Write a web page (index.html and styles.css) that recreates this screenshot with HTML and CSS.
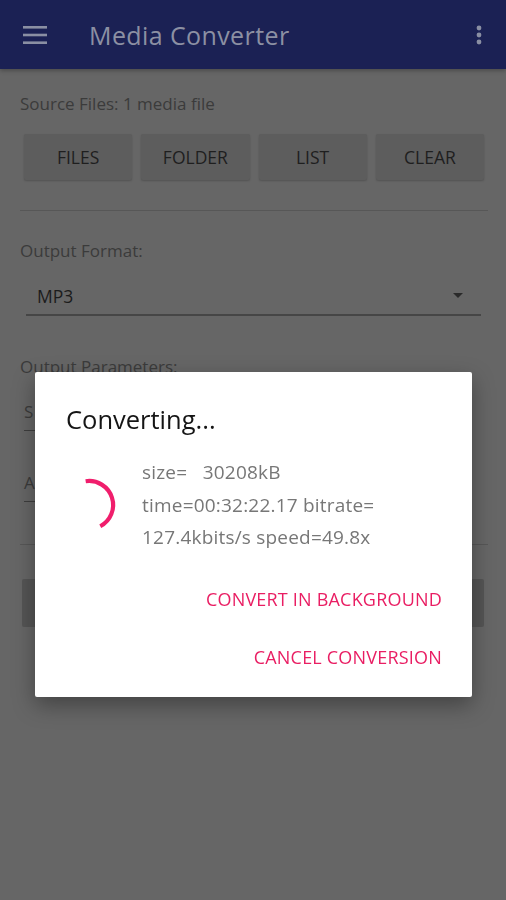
FILE: index.html
```html
<!DOCTYPE html>
<html lang="en">
<head>
    <meta charset="UTF-8">
    <meta name="viewport" content="width=device-width, initial-scale=1.0">
    <title>Media Converter</title>
    <link rel="stylesheet" href="styles.css">
</head>
<body>
    <header class="app-bar">
        <svg class="menu-icon" width="24" height="18" viewBox="0 0 24 18">
            <rect x="0" y="0" width="24" height="2.6" fill="#8a8fa3"/>
            <rect x="0" y="7.7" width="24" height="2.6" fill="#8a8fa3"/>
            <rect x="0" y="15.4" width="24" height="2.6" fill="#8a8fa3"/>
        </svg>
        <h1 class="app-title">Media Converter</h1>
        <svg class="more-icon" width="6" height="20" viewBox="0 0 6 20">
            <circle cx="3" cy="3" r="2.4" fill="#8a8fa3"/>
            <circle cx="3" cy="10" r="2.4" fill="#8a8fa3"/>
            <circle cx="3" cy="17" r="2.4" fill="#8a8fa3"/>
        </svg>
    </header>

    <main class="content">
        <p class="label source">Source Files: 1 media file</p>
        <div class="btn-row">
            <button class="flat-btn">FILES</button>
            <button class="flat-btn">FOLDER</button>
            <button class="flat-btn">LIST</button>
            <button class="flat-btn">CLEAR</button>
        </div>
        <hr class="divider">

        <p class="label">Output Format:</p>
        <div class="spinner-field">
            <span>MP3</span>
            <span class="arrow"></span>
        </div>

        <p class="label params">Output Parameters:</p>
        <div class="param-field">S</div>
        <div class="param-field">A</div>
        <hr class="divider low">
        <div class="start-btn"></div>
    </main>

    <div class="scrim">
        <div class="dialog">
            <h2 class="dialog-title">Converting...</h2>
            <div class="dialog-body">
                <svg class="progress" width="60" height="60" viewBox="0 0 60 60">
                    <path d="M30 6 A24 24 0 0 1 38.2 52.6" fill="none" stroke="#f01e6c" stroke-width="4.2" stroke-linecap="butt" transform="rotate(-8 30 30)"/>
                </svg>
                <div class="dialog-msg">
                    size=&nbsp;&nbsp;&nbsp;30208kB<br>
                    time=00:32:22.17 bitrate=<br>
                    127.4kbits/s speed=49.8x
                </div>
            </div>
            <div class="dialog-actions">
                <button class="text-btn">CONVERT IN BACKGROUND</button>
                <button class="text-btn">CANCEL CONVERSION</button>
            </div>
        </div>
    </div>
</body>
</html>
```

FILE: styles.css
```css
body {
    font-family: 'Open Sans', 'Noto Sans', sans-serif;
    background: #666666;
    margin: 0;
    padding: 0;
    height: 900px;
    overflow: hidden;
}

.app-bar {
    background: #1b2154;
    height: 69px;
    display: flex;
    align-items: center;
    padding: 0 24px 0 23px;
    box-shadow: 0 2px 4px rgba(0, 0, 0, 0.25);
}

.menu-icon {
    margin-top: 1px;
}

.app-title {
    margin: 0 0 0 42px;
    font-size: 25px;
    font-weight: 400;
    color: #8c90a3;
    flex: 1;
    letter-spacing: 0.4px;
}

.more-icon {
    margin-top: 1px;
}

.content {
    padding: 0 18px 0 20px;
}

.label {
    margin: 0;
    font-size: 17px;
    color: #3b3b3b;
}

.source {
    padding-top: 23px;
}

.btn-row {
    display: flex;
    gap: 9px;
    padding: 19px 4px 0 4px;
}

.flat-btn {
    flex: 1;
    height: 46px;
    background: #5d5d5d;
    border: none;
    border-radius: 2px;
    box-shadow: 0 1px 2px rgba(0, 0, 0, 0.2);
    font-family: inherit;
    font-size: 17.5px;
    color: #1f1f1f;
}

.divider {
    border: none;
    border-top: 1px solid #575757;
    margin: 30px 0 28px 0;
}

.spinner-field {
    margin: 15px 7px 0 6px;
    height: 37px;
    border-bottom: 2px solid #464646;
    display: flex;
    align-items: center;
    justify-content: space-between;
    padding: 0 18px 0 11px;
    font-size: 17.5px;
    color: #1c1c1c;
}

.arrow {
    width: 0;
    height: 0;
    border-left: 5px solid transparent;
    border-right: 5px solid transparent;
    border-top: 5px solid #2a2a2a;
}

.params {
    padding-top: 39px;
}

.param-field {
    margin: 22px 0 0 4px;
    width: 20px;
    height: 30px;
    border-bottom: 1px solid #3e3e3e;
    color: #3b3b3b;
    font-size: 17px;
}

.param-field + .param-field {
    margin-top: 40px;
}

.divider.low {
    margin: 42px 0 0 0;
}

.start-btn {
    margin: 34px 4px 0 2px;
    height: 48px;
    background: #555555;
    border-radius: 2px;
}

.scrim {
    position: fixed;
    inset: 0;
    padding: 372px 34px 0 35px;
}

.dialog {
    background: #ffffff;
    height: 325px;
    border-radius: 2px;
    box-shadow: 0 8px 22px rgba(0, 0, 0, 0.35);
    box-sizing: border-box;
    padding: 30px 30px 0 31px;
}

.dialog-title {
    margin: 0;
    font-size: 25.5px;
    font-weight: 400;
    color: #151515;
    line-height: 34px;
}

.dialog-body {
    display: flex;
    align-items: center;
    margin-top: 20px;
}

.progress {
    margin: 0 23px 0 -7px;
    flex-shrink: 0;
}

.dialog-msg {
    font-size: 19px;
    line-height: 32.5px;
    color: #777777;
    letter-spacing: 0.2px;
}

.dialog-actions {
    display: flex;
    flex-direction: column;
    align-items: flex-end;
    margin-top: 16px;
}

.text-btn {
    background: none;
    border: none;
    padding: 0;
    font-family: inherit;
    font-size: 18px;
    color: #e91e63;
    height: 58px;
    letter-spacing: 0.2px;
}
```
